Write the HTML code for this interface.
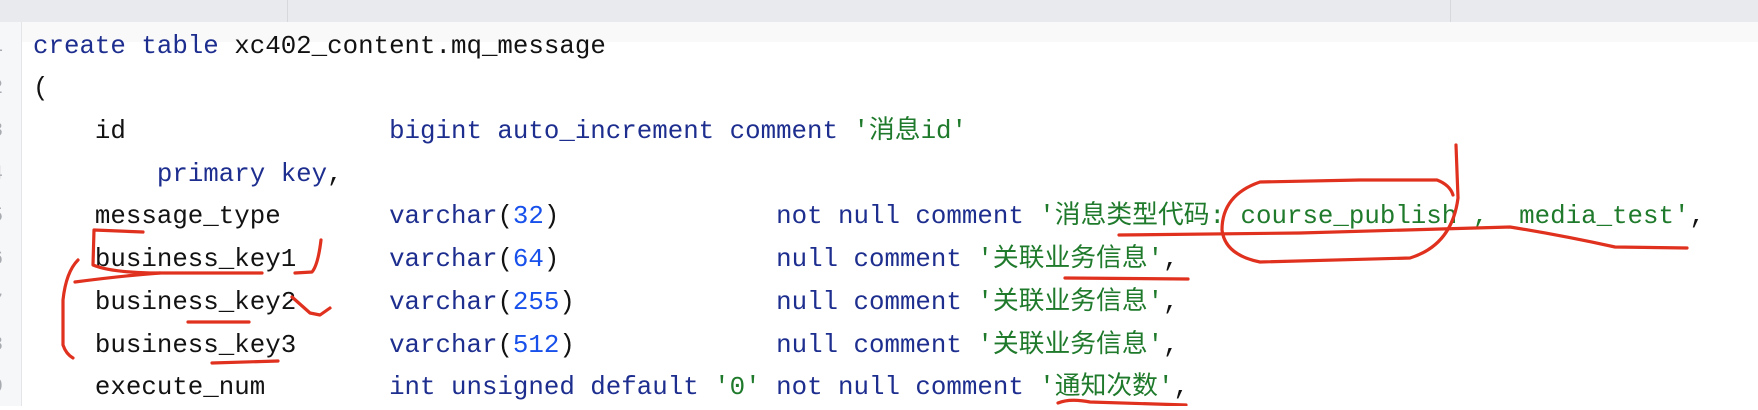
<!DOCTYPE html>
<html><head><meta charset="utf-8"><style>
html,body{margin:0;padding:0;}
body{width:1758px;height:406px;overflow:hidden;background:#fff;position:relative;font-family:"Liberation Mono","Noto Sans CJK SC",monospace;}
.top{position:absolute;left:0;top:0;width:1758px;height:22px;background:#e8eaed;}
.div{position:absolute;top:0;width:1px;height:22px;background:#d6d8db;}
.band{position:absolute;left:0;top:22px;width:1758px;height:20px;background:#f9f9fa;}
.gut{position:absolute;left:0;top:22px;width:21px;height:384px;background:#f6f7f9;border-right:1px solid #e4e5e8;overflow:hidden;}
.gut div{position:absolute;left:-9px;font-size:20px;color:#a8abb0;line-height:42.7px;}
.code{position:absolute;left:33px;top:25.65px;margin:0;font-size:25.8px;line-height:42.7px;color:#121212;white-space:pre;}
.k{color:#1d2e8f}.s{color:#1f7a2c}.n{color:#1750eb}
svg{position:absolute;left:0;top:0;}
</style></head><body>
<div class="top"></div><div class="div" style="left:287px"></div><div class="div" style="left:1450px"></div>
<div class="band"></div>
<div class="gut">
<div style="top:3.6px">1</div><div style="top:46.3px">2</div><div style="top:89px">3</div><div style="top:131.7px">4</div><div style="top:174.4px">5</div><div style="top:217.1px">6</div><div style="top:259.8px">7</div><div style="top:302.5px">8</div><div style="top:345.2px">9</div>
</div>
<pre class="code"><span class="k">create table</span> xc402_content.mq_message
(
    id                 <span class="k">bigint auto_increment comment</span> <span class="s">'消息id'</span>
        <span class="k">primary key</span>,
    message_type       <span class="k">varchar</span>(<span class="n">32</span>)              <span class="k">not null comment</span> <span class="s">'消息类型代码: course_publish ,  media_test'</span>,
    business_key1      <span class="k">varchar</span>(<span class="n">64</span>)              <span class="k">null comment</span> <span class="s">'关联业务信息'</span>,
    business_key2      <span class="k">varchar</span>(<span class="n">255</span>)             <span class="k">null comment</span> <span class="s">'关联业务信息'</span>,
    business_key3      <span class="k">varchar</span>(<span class="n">512</span>)             <span class="k">null comment</span> <span class="s">'关联业务信息'</span>,
    execute_num        <span class="k">int unsigned default</span> <span class="s">'0'</span> <span class="k">not null comment</span> <span class="s">'通知次数'</span>,
</pre>
<svg width="1758" height="406" viewBox="0 0 1758 406" fill="none" stroke="#e0301e" stroke-width="3.2" stroke-linecap="round" stroke-linejoin="round">
<path d="M1456,145 L1458,198 Q1452,245 1410,258 L1260,262 Q1225,255 1222,230 Q1222,195 1260,182 L1360,180 L1437,180 Q1450,185 1453,195"/>
<path d="M1119,235 L1300,233 L1510,227 Q1560,235 1615,247 L1687,248"/>
<path d="M1065,278 L1188,279"/>
<path d="M1058,403 Q1070,398 1090,402 L1186,405"/>
<path d="M78,260 Q66,272 63,300 L63,345 Q66,354 73,358"/>
<path d="M143,232 L94,230 L93,265 Q110,272 150,273 L262,273"/>
<path d="M75,282 Q120,276 160,273"/>
<path d="M321,240 Q318,265 312,272 L295,273"/>
<path d="M292,297 L310,313 L320,315 L330,308"/>
<path d="M188,322 L249,322"/>
<path d="M212,363 L278,361"/>
</svg>
</body></html>
